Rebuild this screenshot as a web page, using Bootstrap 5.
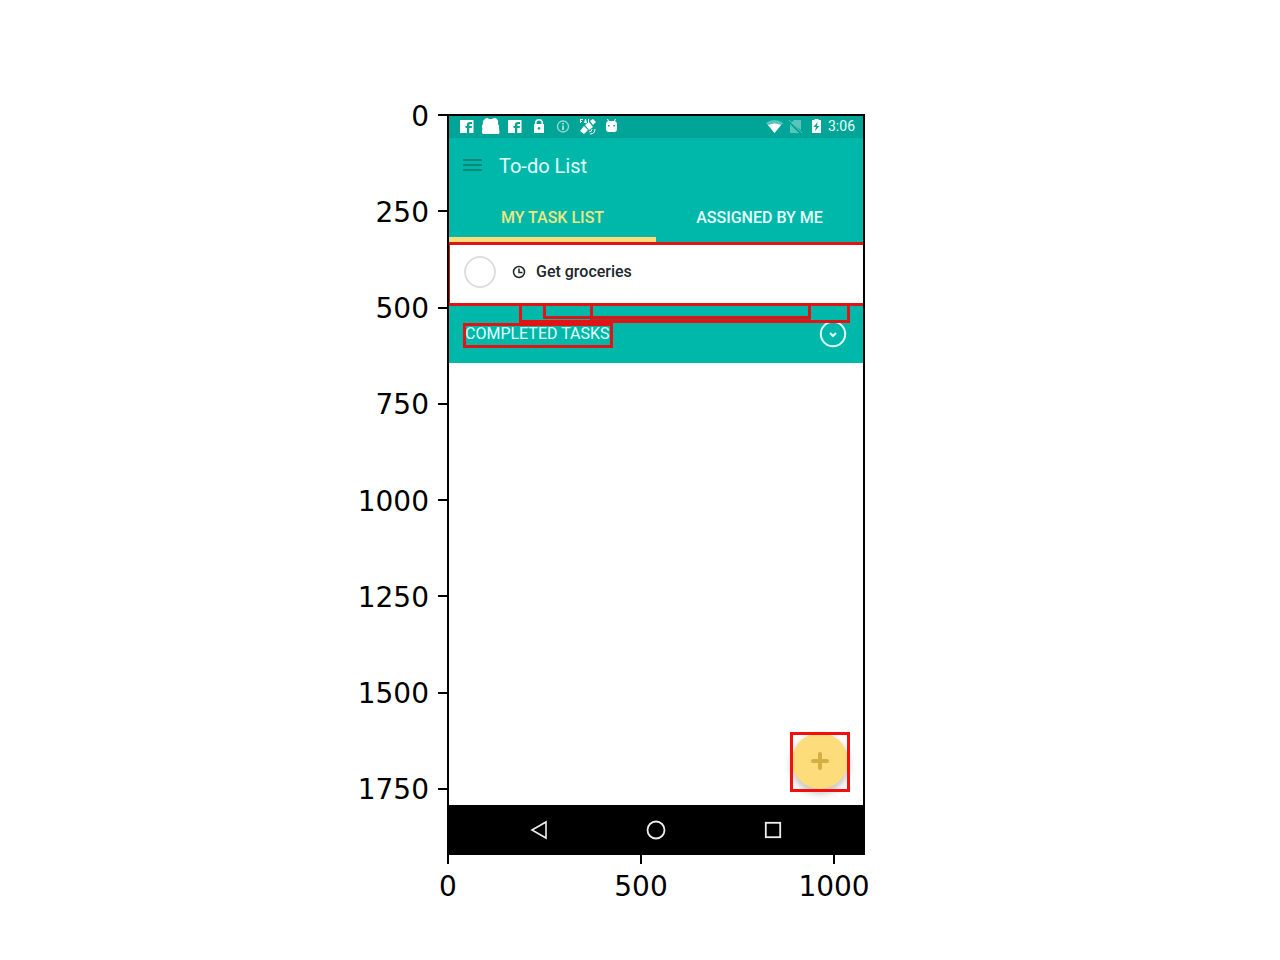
<!DOCTYPE html>
<html lang="en">
<head>
<meta charset="utf-8">
<meta name="viewport" content="width=device-width, initial-scale=1">
<title>To-do List</title>
<link href="https://cdn.jsdelivr.net/npm/bootstrap@5.3.0/dist/css/bootstrap.min.css" rel="stylesheet">
<style>
  :root { --teal: #00b8aa; --teal-dark: #00a597; --sun: #fddc7c; --mark: #e01414; }
  body { background: #fff; color: #000; font-family: Roboto, "Liberation Sans", sans-serif; }
  svg { display: block; flex: none; }

  /* plot: y axis | screen | spare, with the x axis below the screen */
  .plot { display: grid; grid-template-columns: minmax(96px, 1fr) minmax(0, 418px) minmax(16px, 1fr); padding: 114px 0 48px 32px; }
  .axis { font: 28px/32px "DejaVu Sans", sans-serif; list-style: none; margin: 0; padding: 0; display: flex; justify-content: space-between; }
  .axis-y { flex-direction: column; margin-bottom: 65px; }
  .axis-y li { height: 2px; display: flex; align-items: center; justify-content: flex-end; gap: 9px; }
  .axis-y span { padding-top: 3px; }
  .axis-y li::after { content: ""; width: 9px; height: 2px; background: #000; }
  .axis-x { grid-column: 2; margin-right: 30px; }
  .axis-x li { width: 2px; display: flex; flex-direction: column; align-items: center; gap: 7px; }
  .axis-x li::before { content: ""; width: 2px; height: 9px; background: #000; flex: none; }

  .screen { border: 2px solid #000; aspect-ratio: 418 / 741; overflow: hidden; }
  .status { background: var(--teal-dark); color: #e9fffc; height: 22px; font-size: 14px; line-height: 20px; padding: 0 8px 0 10px; }
  .appbar { background: var(--teal); height: 56px; padding: 0 14px; gap: 16px; }
  .appbar h1 { font-size: 20px; line-height: 24px; color: #e4fffb; }
  .plain { background: none; border: 0; padding: 0; }
  .tabs { background: var(--teal); height: 48px; }
  .tabs button { flex: 1 1 0; font-size: 16px; font-weight: 500; color: #e4fffb; border-bottom: 5px solid transparent; padding-top: 4px; }
  .tabs button[aria-selected="true"] { color: #ece784; border-color: var(--sun); }
  .task { height: 64px; border: solid var(--mark); border-width: 3px 0; box-shadow: inset 1px 0 var(--mark); padding: 0 15px 4px; color: #20262a; font-size: 16px; font-weight: 500; }
  .task input { appearance: none; width: 32px; height: 32px; border: 2px solid #dedede; border-radius: 50%; margin: 0 16px 0 0; }
  .done-bar { background: var(--teal); height: 57px; padding: 0 16px 2px; color: #e4fffb; }
  .done-bar h2 { font-size: 16px; line-height: 20px; font-weight: 400; }
  .outline-box { position: absolute; border: 3px solid var(--mark); pointer-events: none; }
  .box-wide { left: 70px; right: 13px; top: -3px; height: 20px; }
  .box-icon { left: 94px; width: 50px; top: -3px; height: 16px; }
  .box-text { left: 141px; right: 52px; top: -3px; height: 16px; box-shadow: 0 1px #7b4a3e; }
  .box-title { left: 14px; width: 150px; top: 17px; height: 25px; }
  .fab-wrap { position: absolute; right: 13px; bottom: 13px; width: 60px; height: 60px; padding: 1px 2px; }
  .fab-wrap::after { content: ""; position: absolute; inset: 0; border: 3px solid #f40f0f; pointer-events: none; }
  .fab { width: 56px; height: 56px; border-radius: 50%; background: var(--sun); box-shadow: 0 4px 8px rgba(0,0,0,.28); }
  .navkeys { background: #000; height: 48px; padding: 2px 32px 0; }
</style>
</head>
<body>
<main class="plot">
  <ol class="axis axis-y" aria-label="Vertical axis">
    <li><span>0</span></li><li><span>250</span></li><li><span>500</span></li><li><span>750</span></li><li><span>1000</span></li><li><span>1250</span></li><li><span>1500</span></li><li><span>1750</span></li>
  </ol>

  <section class="screen d-flex flex-column">
    <div class="status d-flex align-items-start justify-content-between">
      <svg width="164" height="20" viewBox="0 0 164 20" fill="#fff" aria-hidden="true">
        <path fill-rule="evenodd" d="M1 4h13.500v13H1zM8 17v-5H6.500v-2H8V8.500Q8 6 10.500 6H13v2h-1.500Q10.300 8 10.300 9v1H13l-.4 2h-2.300v5z"/>
        <path d="M26 3q2-2 4 0h3q3-2 5 0 2 2 1 5 2 2 1 5 1 3 0 5H24q-2-2-.5-5-1.500-3 .5-5-1-3 2-5z"/>
        <path transform="translate(48)" fill-rule="evenodd" d="M1 4h13.500v13H1zM8 17v-5H6.500v-2H8V8.500Q8 6 10.500 6H13v2h-1.500Q10.300 8 10.300 9v1H13l-.4 2h-2.300v5z"/>
        <path fill-rule="evenodd" d="M75 8h1V7a4 4 0 0 1 8 0v1h1v9H75zM77.500 8h5V7a2.500 2.500 0 0 0-5 0zM80 11a1.400 1.400 0 1 0 .01 0z"/>
        <g opacity=".6"><circle cx="104" cy="10.500" r="5.500" fill="none" stroke="#fff" stroke-width="1.300"/><path d="M103 7h2v1.500h-2zM103 9.500h2v4.500h-2z"/></g>
        <path d="M121 3h3v1h-2v1h1v1h-1v1h-1zM125 7l1-4h1l1 4h-1zM129 3h1v4h-1z"/>
        <path d="m131 5 3-2 3 3-3 3zM126 9l4-3 4 5-4 3zM121 15l4-5 4 4-4 4z"/>
        <path d="M130 16q3 0 3-3M131 18q5 0 5-5" fill="none" stroke="#fff"/>
        <path fill-rule="evenodd" d="M147 8q0-2 2-3l-1-2h1l1 2h5l1-2h1l-1 2q2 1 2 3v5q0 3-3 3h-5q-3 0-3-3zM149 9v1.500h1.500V9zM154.500 9v1.500h1.500V9z"/>
      </svg>
      <div class="d-flex align-items-start">
        <svg width="62" height="20" viewBox="0 0 62 20" fill="#fff" aria-hidden="true">
          <path opacity=".35" d="M0 7q8-6 17 0l-8.500 10z"/><path d="M2 9q6.500-3 13 0l-6.500 8z"/>
          <g opacity=".35"><path d="M25 7l3-3h7v10zM24 8l9 9h-9z"/><path d="m23 4 13 13" stroke="#fff"/></g>
          <path fill-rule="evenodd" d="M46 4h2.500V3h4v1H55v13h-9zM51.500 6l-4 5h2.500l-1 4 4.500-5h-2.500z"/>
        </svg>
        <span>3:06</span>
      </div>
    </div>

    <header class="appbar d-flex align-items-center">
      <button class="plain" type="button" aria-label="Menu">
        <svg width="20" height="14" viewBox="0 0 20 14" stroke="#068579" stroke-width="2"><path d="M0 1h19M0 6h19M0 11h19"/></svg>
      </button>
      <h1 class="m-0 fw-normal">To-do List</h1>
    </header>

    <div class="tabs d-flex" role="tablist">
      <button class="plain" type="button" role="tab" aria-selected="true">MY TASK LIST</button>
      <button class="plain" type="button" role="tab" aria-selected="false">ASSIGNED BY ME</button>
    </div>

    <div class="task d-flex align-items-center">
      <input type="checkbox" id="groceries">
      <label class="d-flex align-items-center" for="groceries">
        <svg class="me-2" width="16" height="16" viewBox="0 0 16 16" fill="none" stroke="#20262a" stroke-width="1.500" aria-hidden="true"><circle cx="7" cy="8" r="5.500"/><path d="M7 4.500v4h3.500"/></svg>
        Get groceries
      </label>
    </div>

    <div class="done-bar d-flex align-items-center justify-content-between position-relative">
      <h2 class="m-0">COMPLETED TASKS</h2>
      <button class="plain" type="button" aria-label="Show completed tasks">
        <svg width="28" height="28" viewBox="0 0 28 28" fill="none" stroke="#e4fffb" stroke-width="2"><circle cx="14" cy="14" r="12.200"/><path d="m11 13 3 3 3-3"/></svg>
      </button>
      <span class="outline-box box-text"></span>
      <span class="outline-box box-icon"></span>
      <span class="outline-box box-wide"></span>
      <span class="outline-box box-title"></span>
    </div>

    <div class="flex-grow-1 position-relative bg-white">
      <div class="fab-wrap">
        <button class="plain fab d-flex align-items-center justify-content-center" type="button" aria-label="Add task">
          <svg width="18" height="18" viewBox="0 0 18 18" stroke="#d3af45" stroke-width="4" stroke-linecap="round"><path d="M9 2v14M2 9h14"/></svg>
        </button>
      </div>
    </div>

    <nav class="navkeys d-flex align-items-center justify-content-around" aria-label="System">
      <button class="plain" type="button" aria-label="Back"><svg width="20" height="20" viewBox="0 0 20 20" fill="none" stroke="#eee" stroke-width="1.600"><path d="M17 2v16L3 10z"/></svg></button>
      <button class="plain" type="button" aria-label="Home"><svg width="20" height="20" viewBox="0 0 20 20" fill="none" stroke="#eee" stroke-width="1.800"><circle cx="10" cy="10" r="8.500"/></svg></button>
      <button class="plain" type="button" aria-label="Recent"><svg width="20" height="20" viewBox="0 0 20 20" fill="none" stroke="#eee" stroke-width="1.800"><rect x="2.800" y="2.800" width="14.400" height="14.400"/></svg></button>
    </nav>
  </section>

  <ol class="axis axis-x" aria-label="Horizontal axis">
    <li>0</li><li>500</li><li>1000</li>
  </ol>
</main>
<script src="https://cdn.jsdelivr.net/npm/bootstrap@5.3.0/dist/js/bootstrap.bundle.min.js"></script>
</body>
</html>
